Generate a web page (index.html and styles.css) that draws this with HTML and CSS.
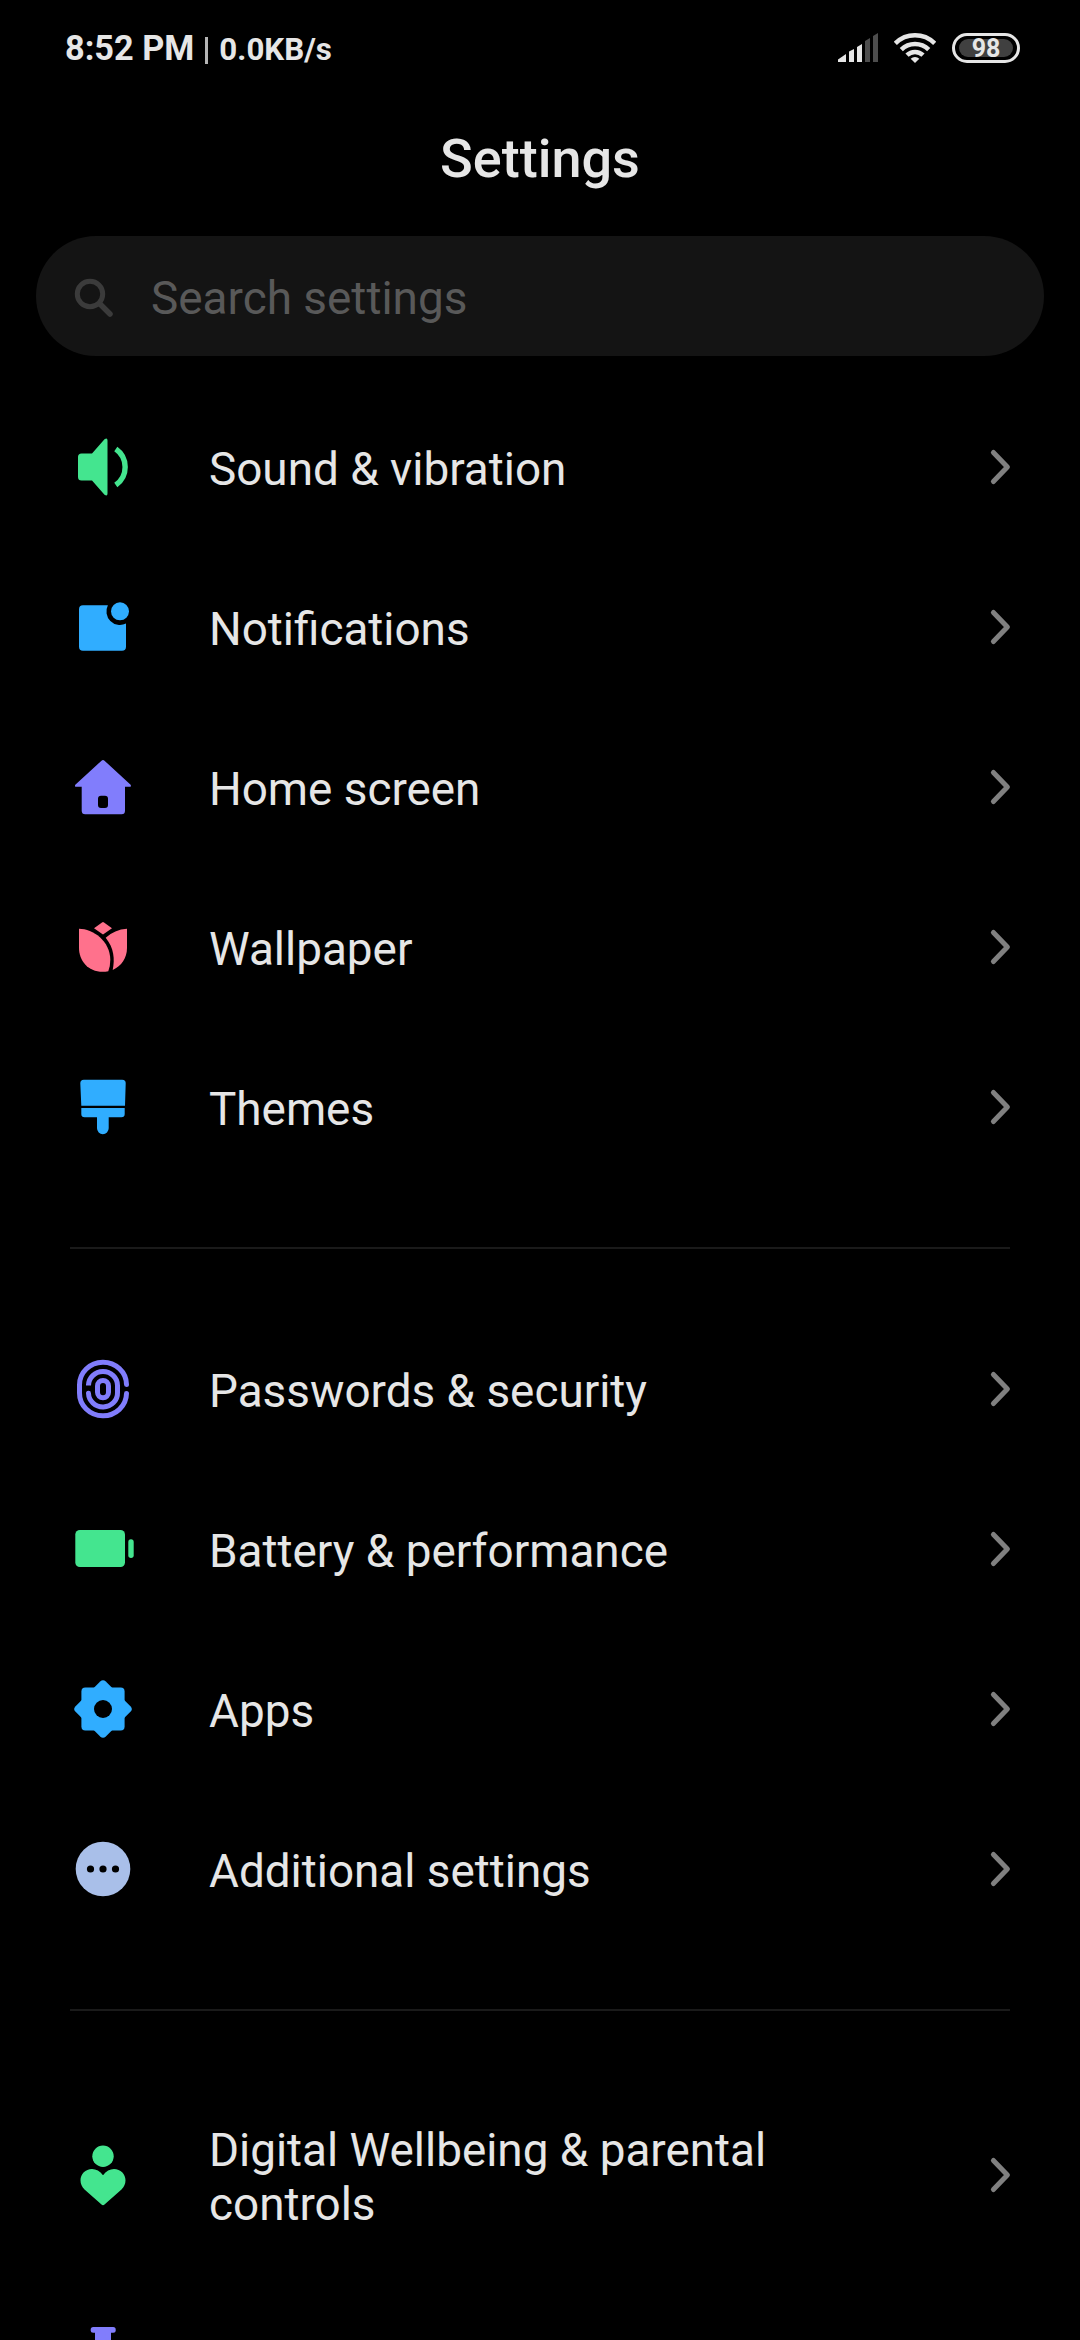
FILE: index.html
```html
<!DOCTYPE html>
<html lang="en">
<head>
<meta charset="utf-8">
<title>Settings</title>
<link rel="stylesheet" href="styles.css">
</head>
<body>
<svg class="defs" width="0" height="0" aria-hidden="true">
  <symbol id="chevron" viewBox="0 0 24 40"><path d="M5.4 5.5 19.4 20 5.4 34.5" fill="none" stroke="#808080" stroke-width="5" stroke-linecap="round" stroke-linejoin="round"/></symbol>
</svg>
<div class="screen">
  <header class="status">
    <div class="status-left"><span class="clock">8:52 PM</span><span class="bar"></span><span class="speed">0.0KB/s</span></div>
    <div class="status-right">
      <svg class="signal" width="40" height="30" viewBox="0 0 40 30">
        <path fill="#e6e6e6" d="M0 29v-2.500L8 21v8zM11 29V18.500L16 16v13zM19 29V14L24 11v18z"/>
        <path fill="#4d4d4d" d="M27 29V8L32 5v24zM35 29V3L40 0v29z"/>
      </svg>
      <svg class="wifi" width="42" height="30" viewBox="0 0 42 30">
        <g fill="none" stroke="#e6e6e6" stroke-width="4.500"><path d="M1.300 10.400a28 28 0 0 1 39.400 0"/><path d="M7.300 16.600a19.400 19.400 0 0 1 27.400 0"/><path d="M13 22.200a11.300 11.300 0 0 1 16 0"/></g>
        <path fill="#e6e6e6" d="M21 30l-4.300-4.300a6 6 0 0 1 8.600 0z"/>
      </svg>
      <div class="battery"><span class="level">98</span></div>
    </div>
  </header>
  <h1 class="title">Settings</h1>
  <div class="search">
    <svg width="40" height="40" viewBox="0 0 40 40"><g fill="none" stroke="#3b3b3b" stroke-width="5"><circle cx="16" cy="16" r="12.700"/><path d="M25.500 25.500 36 36" stroke-width="5.500" stroke-linecap="round"/></g></svg>
    <span>Search settings</span>
  </div>
  <main class="list">
    <section class="group">
      <div class="row">
        <svg class="icon green" viewBox="0 0 66 66"><path d="M11.500 19.500H22L34.500 5.200q3-2 3 1.300v53q0 3.300-3 1.300L22 46.500H11.500q-3.500 0-3.500-3.500V23q0-3.500 3.500-3.500z"/><path d="M45.800 15a22 22 0 0 1 0 36" fill="none" stroke="#44e58f" stroke-width="5.400"/></svg>
        <span class="label">Sound &amp; vibration</span><svg class="chev"><use href="#chevron"/></svg>
      </div>
      <div class="row">
        <svg class="icon blue" viewBox="0 0 66 66"><path d="M13 11.300H37.900A13.500 13.500 0 0 0 56 29.500V52.700q0 4-4 4H13q-4 0-4-4V15.300q0-4 4-4z"/><circle cx="50" cy="17.300" r="9"/></svg>
        <span class="label">Notifications</span><svg class="chev"><use href="#chevron"/></svg>
      </div>
      <div class="row">
        <svg class="icon violet" viewBox="0 0 66 66"><path fill-rule="evenodd" d="M31.500 6.700q1.500-1.300 3 0L60.600 30.800q1 2-1 2H55V56.800q0 3.500-3.500 3.500H15.200q-3.500 0-3.500-3.500V32.800H6.300q-2 0-1-2zM31 41.700q-3 0-3 3V51q0 3 3 3h4q3 0 3-3v-6.300q0-3-3-3z"/></svg>
        <span class="label">Home screen</span><svg class="chev"><use href="#chevron"/></svg>
      </div>
      <div class="row">
        <svg class="icon pink" viewBox="0 0 66 66"><path d="M32 8.500q1-.8 2 0L42 14.300 33 20.500 24 14.300z"/><path d="M9 14.700C23 14.700 40.300 27 40.300 46Q40.300 52 38.300 57.300C20 60.500 9 48 9 34z"/><path d="M57 14.700Q44.500 15.500 35.700 23.700C44 34 45 45 42.700 56 51.500 52 57 44 57 34z"/></svg>
        <span class="label">Wallpaper</span><svg class="chev"><use href="#chevron"/></svg>
      </div>
      <div class="row">
        <svg class="icon blue" viewBox="0 0 66 66"><path d="M13.800 5.700H52.200q3.600 0 3.500 3.500L55 31.700H11.300L10.300 9.200q0-3.500 3.500-3.500zM11.300 34H54.700v6q0 3.300-3.300 3.300H38.700V54.300a5.850 5.850 0 0 1-11.700 0V43.300H14.600q-3.300 0-3.300-3.300z"/></svg>
        <span class="label">Themes</span><svg class="chev"><use href="#chevron"/></svg>
      </div>
    </section>
    <hr class="divider">
    <section class="group">
      <div class="row">
        <svg class="icon" viewBox="0 0 66 66"><g fill="none" stroke="#817dfc" stroke-width="5" stroke-linecap="round"><path d="M56.500 28.500A23.500 22.500 0 0 0 9.500 29v8a23.500 22.500 0 0 0 47 .5"/><path d="M18.500 28.500V29.500a14.500 14 0 0 1 29 0v7a14.500 14 0 0 1-29 .8"/><rect x="27.500" y="24.500" width="11" height="17.300" rx="5.500"/></g></svg>
        <span class="label">Passwords &amp; security</span><svg class="chev"><use href="#chevron"/></svg>
      </div>
      <div class="row">
        <svg class="icon green" viewBox="0 0 66 66"><rect x="5.300" y="14" width="49.700" height="37" rx="4.500"/><rect x="58.300" y="23.300" width="5.400" height="18.700" rx="2.700"/></svg>
        <span class="label">Battery &amp; performance</span><svg class="chev"><use href="#chevron"/></svg>
      </div>
      <div class="row">
        <svg class="icon blue" viewBox="0 0 66 66"><rect x="11.400" y="11.400" width="43.200" height="43.200" rx="4"/><rect x="11.600" y="11.600" width="42.800" height="42.800" rx="4" transform="rotate(45 33 33)"/><circle cx="33" cy="33" r="9" fill="#000"/></svg>
        <span class="label">Apps</span><svg class="chev"><use href="#chevron"/></svg>
      </div>
      <div class="row">
        <svg class="icon pale" viewBox="0 0 66 66"><circle cx="33" cy="33" r="27.300"/><g fill="#000"><circle cx="20.500" cy="33" r="3.600"/><circle cx="33" cy="33" r="3.600"/><circle cx="45.500" cy="33" r="3.600"/></g></svg>
        <span class="label">Additional settings</span><svg class="chev"><use href="#chevron"/></svg>
      </div>
    </section>
    <hr class="divider">
    <section class="group">
      <div class="row tall">
        <svg class="icon green" viewBox="0 0 66 66"><circle cx="33" cy="14.300" r="10.700"/><path d="M33 33.300C36 29 40 27 44 27c6.500 0 11.500 5 11.500 11.300 0 4-1.500 6.500-4 9.200L34.500 62.500q-1.500 1.300-3 0L14.500 47.500c-2.500-2.700-4-5.200-4-9.200C10.500 32 15.500 27 22 27c4 0 8 2 11 6.300z"/></svg>
        <span class="label">Digital Wellbeing &amp; parental controls</span><svg class="chev"><use href="#chevron"/></svg>
      </div>
      <div class="row">
        <svg class="icon violet" viewBox="0 0 66 66"><rect x="20.700" y="1" width="25" height="5.700" rx="2.500"/><path d="M25 5H41V24L56 54q2 6-4 6H14q-6 0-4-6L25 24z"/></svg>
      </div>
    </section>
  </main>
</div>
</body>
</html>
```
FILE: styles.css
```css
* { box-sizing: border-box; }

body {
  margin: 0;
  background: #000;
  color: #e6e6e6;
  font-family: Roboto, "Liberation Sans", sans-serif;
}

.defs { display: block; }

.screen {
  display: flex;
  flex-direction: column;
  width: 1080px;
  height: 2340px;
  overflow: hidden;
  background: #000;
}

.status {
  flex: none;
  display: flex;
  justify-content: space-between;
  height: 96px;
  padding: 0 60px 0 65px;
}

.status-left {
  display: flex;
  align-items: baseline;
  height: 96px;
  line-height: 96px;
  font-weight: 700;
}

.clock { font-size: 34.3px; }
.bar { width: 3px; height: 27px; margin: 0 11px 0 11px; background: #b5b5b5; transform: translateY(4px); }
.speed { font-size: 31.3px; }

.status-right {
  display: flex;
  align-items: center;
  height: 96px;
}

.wifi { margin: 0 16px; }

.battery {
  width: 68px;
  height: 30px;
  padding: 3px 4px;
  border: 3px solid #e6e6e6;
  border-radius: 15px;
}

.level {
  display: block;
  height: 18px;
  border-radius: 9px;
  background: #404040;
  font-size: 25px;
  font-weight: 700;
  line-height: 19px;
  text-align: center;
}

.title {
  flex: none;
  height: 140px;
  margin: 0;
  font-size: 54px;
  font-weight: 500;
  line-height: 125px;
  text-align: center;
}

.search {
  flex: none;
  display: flex;
  align-items: center;
  gap: 37px;
  height: 120px;
  margin: 0 36px 31px;
  padding: 3px 0 0 38px;
  border-radius: 60px;
  background: #141414;
  color: #595959;
  font-size: 45.9px;
}

.list { flex: none; }

.row {
  display: flex;
  align-items: center;
  height: 160px;
  padding: 0 68px 0 70px;
}

.tall { height: 208px; }

.icon { flex: none; width: 66px; height: 66px; }
.green { fill: #44e58f; }
.blue { fill: #30adff; }
.violet { fill: #817dfc; }
.pink { fill: #ff718c; }
.pale { fill: #a9bfe9; }

.label {
  width: 620px;
  margin: 0 auto 0 73px;
  padding-top: 4px;
  font-size: 45.85px;
  line-height: 54px;
}

.chev { flex: none; width: 24px; height: 40px; }

.divider {
  height: 2px;
  margin: 60px 70px;
  border: 0;
  background: #1a1a1a;
}
```
